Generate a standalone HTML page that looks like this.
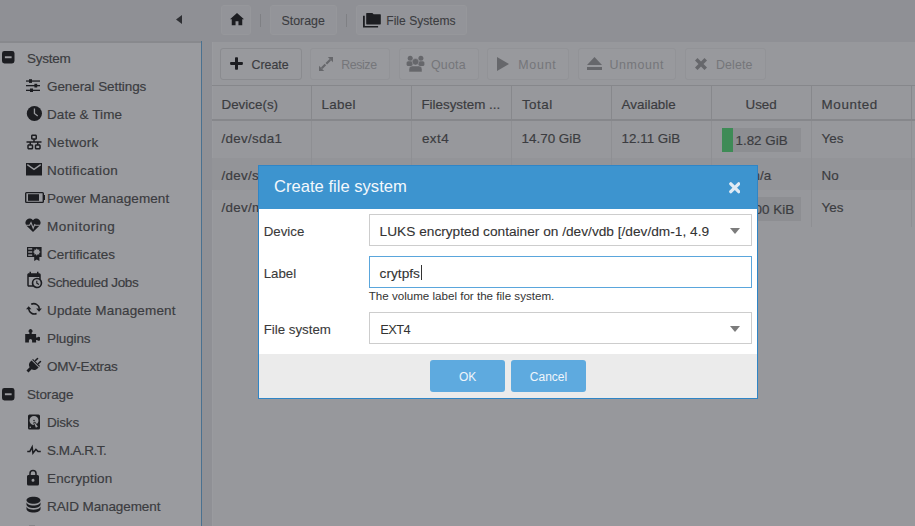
<!DOCTYPE html>
<html><head><meta charset="utf-8">
<style>
*{box-sizing:border-box;margin:0;padding:0}
html,body{width:915px;height:526px;overflow:hidden;background:#8f9095;font-family:"Liberation Sans",sans-serif;font-size:13px}
.a{position:absolute}
.t{position:absolute;white-space:nowrap;line-height:1;-webkit-text-stroke:0.18px currentColor}
svg{display:block}
</style></head><body>
<div class="a" style="left:0px;top:0px;width:915px;height:41px;background:#8f9095;"></div>
<svg class="a" style="left:176px;top:15px" width="6" height="9" viewBox="0 0 6 9" fill="#2e2f33"><path d="M6 0L0 4.5L6 9Z"/></svg>
<div class="a" style="left:221px;top:5px;width:30px;height:30px;background:#939499;border-radius:3px;border:1px solid #96979b"></div>
<svg class="a" style="left:230px;top:13px" width="14" height="13" viewBox="0 0 24 22" fill="#1c1d21"><path d="M12 0L0 10.5h3V21h6.5v-7h5v7H21V10.5h3Z"/></svg>
<div class="a" style="left:260px;top:14px;width:1px;height:13px;background:#7f8084;"></div>
<div class="a" style="left:270px;top:5px;width:67px;height:30px;background:#939499;border-radius:3px;border:1px solid #96979b"></div>
<div class="t" style="left:281.5px;top:14.70px;font-size:12.4px;color:#3b3c40;-webkit-text-stroke:0.1px currentColor">Storage</div>
<div class="a" style="left:346px;top:14px;width:1px;height:13px;background:#7f8084;"></div>
<div class="a" style="left:356px;top:5px;width:111px;height:30px;background:#939499;border-radius:3px;border:1px solid #96979b"></div>
<svg class="a" style="left:362px;top:12px" width="20" height="16" viewBox="0 0 20 16" fill="#1c1d21"><path d="M4.2 1.6a.6 .6 0 0 1 .6-.6H10.4L11.6 2.2H18.2a.6 .6 0 0 1 .6.6V11.8a.6 .6 0 0 1-.6.6H4.8a.6 .6 0 0 1-.6-.6Z"/><path d="M1 3.8H2.8V14H16.1V15.6H1Z"/></svg>
<div class="t" style="left:386.3px;top:14.96px;font-size:12.1px;color:#3b3c40;-webkit-text-stroke:0.1px currentColor">File Systems</div>
<div class="a" style="left:0px;top:41px;width:202px;height:485px;background:#9a9b9f;"></div>
<div class="a" style="left:0px;top:41px;width:201px;height:2px;background:#88898d;"></div>
<div class="a" style="left:201px;top:41px;width:1px;height:485px;background:#4a7190;"></div>
<div class="a" style="left:202px;top:41px;width:10px;height:485px;background:#8f9095;"></div>
<div class="a" style="left:212px;top:42px;width:703px;height:484px;background:#97989c;"></div>
<div class="a" style="left:212px;top:42px;width:1px;height:484px;background:#9a9b9f;"></div>
<div class="t" style="left:26.9px;top:51.87px;font-size:13.5px;color:#3b3c40;letter-spacing:-0.25px">System</div>
<div class="t" style="left:47px;top:79.87px;font-size:13.5px;color:#3b3c40;letter-spacing:-0.08px">General Settings</div>
<div class="t" style="left:47px;top:107.87px;font-size:13.5px;color:#3b3c40;letter-spacing:0.07px">Date &amp; Time</div>
<div class="t" style="left:47px;top:135.87px;font-size:13.5px;color:#3b3c40;letter-spacing:0.31px">Network</div>
<div class="t" style="left:47px;top:163.87px;font-size:13.5px;color:#3b3c40;letter-spacing:0.37px">Notification</div>
<div class="t" style="left:47px;top:191.87px;font-size:13.5px;color:#3b3c40;letter-spacing:0.09px">Power Management</div>
<div class="t" style="left:47px;top:219.87px;font-size:13.5px;color:#3b3c40;letter-spacing:0.53px">Monitoring</div>
<div class="t" style="left:47px;top:247.87px;font-size:13.5px;color:#3b3c40;letter-spacing:0.05px">Certificates</div>
<div class="t" style="left:47px;top:275.87px;font-size:13.5px;color:#3b3c40;letter-spacing:-0.33px">Scheduled Jobs</div>
<div class="t" style="left:47px;top:303.87px;font-size:13.5px;color:#3b3c40;letter-spacing:0.15px">Update Management</div>
<div class="t" style="left:47px;top:331.87px;font-size:13.5px;color:#3b3c40;letter-spacing:-0.11px">Plugins</div>
<div class="t" style="left:47px;top:359.87px;font-size:13.5px;color:#3b3c40;letter-spacing:-0.22px">OMV-Extras</div>
<div class="t" style="left:26.9px;top:387.87px;font-size:13.5px;color:#3b3c40;letter-spacing:-0.12px">Storage</div>
<div class="t" style="left:47px;top:415.87px;font-size:13.5px;color:#3b3c40;letter-spacing:-0.21px">Disks</div>
<div class="t" style="left:47px;top:443.87px;font-size:13.5px;color:#3b3c40;letter-spacing:-0.54px">S.M.A.R.T.</div>
<div class="t" style="left:47px;top:471.87px;font-size:13.5px;color:#3b3c40;letter-spacing:0.16px">Encryption</div>
<div class="t" style="left:47px;top:499.87px;font-size:13.5px;color:#3b3c40;letter-spacing:-0.1px">RAID Management</div>
<svg class="a" style="left:2px;top:51px" width="12.5" height="12.5" viewBox="0 0 13 13" fill="#1c1d21"><rect x="0" y="0" width="13" height="13" rx="2.5"/><rect x="3" y="5.5" width="7" height="2" fill="#9a9b9f"/></svg>
<svg class="a" style="left:2px;top:388px" width="12.5" height="12.5" viewBox="0 0 13 13" fill="#1c1d21"><rect x="0" y="0" width="13" height="13" rx="2.5"/><rect x="3" y="5.5" width="7" height="2" fill="#9a9b9f"/></svg>
<div class="a" style="left:220px;top:48px;width:82px;height:32px;background:#98999d;border:1px solid #8a8b8f;border-radius:3px"></div>
<div class="a" style="left:310px;top:48px;width:80px;height:32px;background:#98999d;border:1px solid #929397;border-radius:3px"></div>
<div class="a" style="left:399px;top:48px;width:80px;height:32px;background:#98999d;border:1px solid #929397;border-radius:3px"></div>
<div class="a" style="left:487px;top:48px;width:82px;height:32px;background:#98999d;border:1px solid #929397;border-radius:3px"></div>
<div class="a" style="left:578px;top:48px;width:98px;height:32px;background:#98999d;border:1px solid #929397;border-radius:3px"></div>
<div class="a" style="left:685px;top:48px;width:81px;height:32px;background:#98999d;border:1px solid #929397;border-radius:3px"></div>
<div class="t" style="left:251.5px;top:58.90px;font-size:12.4px;color:#3b3c40;">Create</div>
<div class="t" style="left:341.2px;top:58.90px;font-size:12.4px;color:#75767a;-webkit-text-stroke:0;letter-spacing:-0.4px">Resize</div>
<div class="t" style="left:431px;top:58.90px;font-size:12.4px;color:#75767a;-webkit-text-stroke:0;letter-spacing:0.2px">Quota</div>
<div class="t" style="left:518.3px;top:58.90px;font-size:12.4px;color:#75767a;-webkit-text-stroke:0;letter-spacing:0.75px">Mount</div>
<div class="t" style="left:609.5px;top:58.90px;font-size:12.4px;color:#75767a;-webkit-text-stroke:0;letter-spacing:0.6px">Unmount</div>
<div class="t" style="left:716px;top:58.90px;font-size:12.4px;color:#75767a;-webkit-text-stroke:0;letter-spacing:0.1px">Delete</div>
<div class="a" style="left:212px;top:85px;width:703px;height:1px;background:#86878b;"></div>
<div class="a" style="left:212px;top:119px;width:703px;height:2px;background:#86878b;"></div>
<div class="a" style="left:311px;top:86px;width:1px;height:33px;background:#87888c;"></div>
<div class="a" style="left:411px;top:86px;width:1px;height:33px;background:#87888c;"></div>
<div class="a" style="left:511px;top:86px;width:1px;height:33px;background:#87888c;"></div>
<div class="a" style="left:611px;top:86px;width:1px;height:33px;background:#87888c;"></div>
<div class="a" style="left:711px;top:86px;width:1px;height:33px;background:#87888c;"></div>
<div class="a" style="left:811px;top:86px;width:1px;height:33px;background:#87888c;"></div>
<div class="a" style="left:911px;top:86px;width:1px;height:33px;background:#87888c;"></div>
<div class="t" style="left:221.5px;top:97.86px;font-size:13.4px;color:#3b3c40;">Device(s)</div>
<div class="t" style="left:321.4px;top:97.86px;font-size:13.4px;color:#3b3c40;letter-spacing:0.35px">Label</div>
<div class="t" style="left:421.4px;top:97.86px;font-size:13.4px;color:#3b3c40;">Filesystem ...</div>
<div class="t" style="left:521.9px;top:97.86px;font-size:13.4px;color:#3b3c40;letter-spacing:0.5px">Total</div>
<div class="t" style="left:621.6px;top:97.86px;font-size:13.4px;color:#3b3c40;">Available</div>
<div class="t" style="left:745.5px;top:97.86px;font-size:13.4px;color:#3b3c40;">Used</div>
<div class="t" style="left:821.6px;top:97.86px;font-size:13.4px;color:#3b3c40;letter-spacing:0.6px">Mounted</div>
<div class="a" style="left:212px;top:158px;width:703px;height:32px;background:#939498;"></div>
<div class="a" style="left:311px;top:121px;width:1px;height:106px;background:#8e8f93;"></div>
<div class="a" style="left:411px;top:121px;width:1px;height:106px;background:#8e8f93;"></div>
<div class="a" style="left:511px;top:121px;width:1px;height:106px;background:#8e8f93;"></div>
<div class="a" style="left:611px;top:121px;width:1px;height:106px;background:#8e8f93;"></div>
<div class="a" style="left:711px;top:121px;width:1px;height:106px;background:#8e8f93;"></div>
<div class="a" style="left:811px;top:121px;width:1px;height:106px;background:#8e8f93;"></div>
<div class="a" style="left:911px;top:121px;width:1px;height:106px;background:#8e8f93;"></div>
<div class="t" style="left:221.5px;top:131.76px;font-size:13.4px;color:#3b3c40;letter-spacing:0.3px">/dev/sda1</div>
<div class="t" style="left:421.9px;top:131.76px;font-size:13.4px;color:#3b3c40;letter-spacing:0.5px">ext4</div>
<div class="t" style="left:521.6px;top:131.76px;font-size:13.4px;color:#3b3c40;">14.70 GiB</div>
<div class="t" style="left:621.6px;top:131.76px;font-size:13.4px;color:#3b3c40;">12.11 GiB</div>
<div class="a" style="left:722px;top:128px;width:79px;height:24px;background:#8d8e92;"></div>
<div class="a" style="left:722px;top:128px;width:11px;height:24px;background:#3e8b56;"></div>
<div class="t" style="left:735.5px;top:133.66px;font-size:13.4px;color:#3b3c40;">1.82 GiB</div>
<div class="t" style="left:821.6px;top:131.96px;font-size:13.4px;color:#3b3c40;">Yes</div>
<div class="t" style="left:221.5px;top:169.06px;font-size:13.4px;color:#3b3c40;letter-spacing:0.3px">/dev/sdb1</div>
<div class="t" style="left:621.6px;top:169.06px;font-size:13.4px;color:#3b3c40;">n/a</div>
<div class="t" style="left:752.5px;top:169.06px;font-size:13.4px;color:#3b3c40;">n/a</div>
<div class="t" style="left:821.6px;top:169.06px;font-size:13.4px;color:#3b3c40;">No</div>
<div class="t" style="left:221.5px;top:201.26px;font-size:13.4px;color:#3b3c40;letter-spacing:0.3px">/dev/md0</div>
<div class="a" style="left:722px;top:197px;width:79px;height:24px;background:#8d8e92;"></div>
<div class="t" style="left:736px;top:202.66px;font-size:13.4px;color:#3b3c40;">16.00 KiB</div>
<div class="t" style="left:821.6px;top:201.26px;font-size:13.4px;color:#3b3c40;">Yes</div>
<div class="a" style="left:258px;top:165px;width:500px;height:234px;background:#2f85c6;"></div>
<div class="a" style="left:259px;top:166px;width:498px;height:43px;background:#3d94cf;"></div>
<div class="a" style="left:259px;top:209px;width:498px;height:145px;background:#ffffff;"></div>
<div class="a" style="left:259px;top:354px;width:498px;height:44px;background:#ebebeb;"></div>
<div class="t" style="left:274px;top:178.55px;font-size:16.6px;color:#f3f8fc;-webkit-text-stroke:0">Create file system</div>
<div class="t" style="left:263.7px;top:224.54px;font-size:13.3px;color:#3a3a3a;-webkit-text-stroke:0.1px currentColor">Device</div>
<div class="t" style="left:263.7px;top:266.54px;font-size:13.3px;color:#3a3a3a;-webkit-text-stroke:0.1px currentColor">Label</div>
<div class="t" style="left:263.7px;top:322.94px;font-size:13.3px;color:#3a3a3a;-webkit-text-stroke:0.1px currentColor">File system</div>
<div class="a" style="left:369px;top:214px;width:383px;height:32px;background:#fff;border:1px solid #cdcdcd"></div>
<div class="a" style="left:369px;top:256px;width:383px;height:32px;background:#fff;border:1px solid #5aa6dc"></div>
<div class="a" style="left:369px;top:312px;width:383px;height:32px;background:#fff;border:1px solid #cdcdcd"></div>
<div class="t" style="left:379.6px;top:225.00px;font-size:13.7px;color:#333;-webkit-text-stroke:0.1px currentColor">LUKS encrypted container on /dev/vdb [/dev/dm-1, 4.9</div>
<div class="t" style="left:379.6px;top:267.00px;font-size:13.7px;color:#333;-webkit-text-stroke:0.1px currentColor">crytpfs</div>
<div class="a" style="left:421px;top:265px;width:1px;height:15px;background:#333;"></div>
<div class="t" style="left:380.2px;top:324.08px;font-size:12.9px;color:#333;-webkit-text-stroke:0;letter-spacing:-0.6px">EXT4</div>
<div class="t" style="left:368.7px;top:289.78px;font-size:11.6px;color:#333;-webkit-text-stroke:0">The volume label for the file system.</div>
<svg class="a" style="left:730px;top:228px" width="10" height="6" viewBox="0 0 10 6" fill="#7c7c7c"><path d="M0 0h10L5 6Z"/></svg>
<svg class="a" style="left:730px;top:326px" width="10" height="6" viewBox="0 0 10 6" fill="#7c7c7c"><path d="M0 0h10L5 6Z"/></svg>
<svg class="a" style="left:728.9px;top:182.2px" width="11.5" height="11.5" viewBox="0 0 11.5 11.5" fill="none"><path d="M1.8 1.8L9.7 9.7M9.7 1.8L1.8 9.7" stroke="#dfeaf4" stroke-width="3.3" stroke-linecap="round"/></svg>
<div class="a" style="left:430px;top:360px;width:75px;height:32px;background:#5eaadf;border-radius:3px"></div>
<div class="a" style="left:511px;top:360px;width:75px;height:32px;background:#5eaadf;border-radius:3px"></div>
<div class="t" style="left:459px;top:370.84px;font-size:12px;color:#eef5fb;-webkit-text-stroke:0">OK</div>
<div class="t" style="left:529.8px;top:370.84px;font-size:12px;color:#eef5fb;-webkit-text-stroke:0">Cancel</div>
<svg class="a" style="left:26px;top:78px" width="14" height="14" viewBox="0 0 14 14" fill="#1c1d21"><rect x="0" y="2.4" width="14" height="1.3"/><rect x="0" y="7" width="14" height="1.3"/><rect x="0" y="11.7" width="14" height="1.3"/><rect x="3" y="1.2" width="3" height="3.7"/><rect x="8.4" y="5.8" width="2.8" height="3.7"/><rect x="4" y="10.5" width="3" height="3.7"/></svg>
<svg class="a" style="left:25.5px;top:105px" width="17" height="17" viewBox="0 0 17 17" fill="#1c1d21"><circle cx="8.4" cy="8.5" r="7.6"/><path d="M7.8 3.6h1.3v4.6l3 2.2l-.8 1l-3.5-2.6Z" fill="#9a9b9f"/></svg>
<svg class="a" style="left:25px;top:133px" width="18" height="18" viewBox="0 0 24 24" fill="#1c1d21"><path d="M10,2C8.89,2 8,2.89 8,4V7C8,8.11 8.89,9 10,9H11V11H2V13H6V15H5C3.89,15 3,15.89 3,17V20C3,21.11 3.89,22 5,22H9C10.11,22 11,21.11 11,20V17C11,15.89 10.11,15 9,15H8V13H16V15H15C13.89,15 13,15.89 13,17V20C13,21.11 13.89,22 15,22H19C20.11,22 21,21.11 21,20V17C21,15.89 20.11,15 19,15H18V13H22V11H13V9H14C15.11,9 16,8.11 16,7V4C16,2.89 15.11,2 14,2H10M10,4H14V7H10V4M5,17H9V20H5V17M15,17H19V20H15V17Z"/></svg>
<svg class="a" style="left:26px;top:163px" width="16" height="12.5" viewBox="0 0 16 12.5" fill="#1c1d21"><path d="M0 0h16v12.5H0Z"/><path d="M1.3 1.6L8 6.4l6.7-4.8" fill="none" stroke="#9a9b9f" stroke-width="1.3"/></svg>
<svg class="a" style="left:24px;top:191px" width="22" height="13" viewBox="0 0 22 13" fill="#1c1d21"><path fill-rule="evenodd" d="M2.5 1h16a1.5 1.5 0 0 1 1.5 1.5v1.5h1v5h-1v1.5a1.5 1.5 0 0 1-1.5 1.5h-16a1.5 1.5 0 0 1-1.5-1.5v-8a1.5 1.5 0 0 1 1.5-1.5ZM2.4 2.3v8.4h16.2v-8.4Z"/><rect x="4" y="3.2" width="11" height="6.6"/></svg>
<svg class="a" style="left:25px;top:218px" width="16" height="14" viewBox="0 0 16 14" fill="#1c1d21"><path d="M8 14L1.3 7.4A4 4 0 0 1 8 2.2A4 4 0 0 1 14.7 7.4Z"/><path d="M0 7.2h4.6l1.4-2.6l2.2 5.6l1.5-3.6l.9.6H16" fill="none" stroke="#9a9b9f" stroke-width="1.1"/></svg>
<svg class="a" style="left:26.5px;top:246.5px" width="15" height="14" viewBox="0 0 15 14" fill="#1c1d21"><path d="M0 0h14.6v10H0Z"/><rect x="1.2" y="1.2" width="4" height="1.4" fill="#9a9b9f"/><rect x="1.2" y="4.3" width="4" height="1.4" fill="#9a9b9f"/><rect x="1.2" y="7.4" width="4" height="1.4" fill="#9a9b9f"/><path d="M9.8 1.2l.9 1.5l1.7-.3l-.3 1.7l1.5.9l-1.5.9l.3 1.7l-1.7-.3l-.9 1.5l-.9-1.5l-1.7.3l.3-1.7l-1.5-.9l1.5-.9l-.3-1.7l1.7.3Z" fill="#9a9b9f"/><path d="M7.2 9h5.2v5l-2.6-1.6l-2.6 1.6Z"/></svg>
<svg class="a" style="left:25px;top:271px" width="18" height="18" viewBox="0 0 24 24" fill="#1c1d21"><path d="M15,13H16.5V15.82L18.94,17.23L18.19,18.53L15,16.69V13M19,8H5V19H9.67C9.24,18.09 9,17.07 9,16A7,7 0 0,1 16,9C17.07,9 18.09,9.24 19,9.67V8M5,21C3.89,21 3,20.1 3,19V5C3,3.89 3.89,3 5,3H6V1H8V3H16V1H18V3H19A2,2 0 0,1 21,5V11.1C22.24,12.36 23,14.09 23,16A7,7 0 0,1 16,23C14.09,23 12.36,22.24 11.1,21H5M16,11.15A4.85,4.85 0 0,0 11.15,16C11.15,18.68 13.32,20.85 16,20.85A4.85,4.85 0 0,0 20.85,16C20.85,13.32 18.68,11.15 16,11.15Z"/></svg>
<svg class="a" style="left:24px;top:299px" width="20" height="20" viewBox="0 0 20 20" fill="#1c1d21"><path d="M7.2 5.3A5.6 5.6 0 0 1 15.4 9.8" fill="none" stroke="#1c1d21" stroke-width="1.6"/><path d="M12.2 9.6h5.7l-2.85 3.1Z"/><path d="M12.6 14.4A5.6 5.6 0 0 1 4.7 10" fill="none" stroke="#1c1d21" stroke-width="1.6"/><path d="M2 10.2h5.4l-2.7-3Z"/></svg>
<svg class="a" style="left:24px;top:328px" width="16" height="16" viewBox="0 0 16 16" fill="#1c1d21"><path d="M1.2 5.9h4.2v-1.3a1.9 1.9 0 1 1 2.3 0v1.3h4.4v3.7h1.1a1.9 1.9 0 1 1 0 2.3h-1.1v2.7H8.1v-2a1.6 1.6 0 0 0-3.2 0v2H1.2Z"/></svg>
<svg class="a" style="left:25px;top:357px" width="17" height="17" viewBox="0 0 24 24" fill="#1c1d21"><g transform="rotate(45 12 12)"><rect x="8" y="0" width="2.2" height="6" rx="1"/><rect x="13.8" y="0" width="2.2" height="6" rx="1"/><path d="M5 6h14v1.6H5Z"/><path d="M5 8.8h14v2.2a7 7 0 0 1-5 6.7V24h-4v-6.3A7 7 0 0 1 5 11Z"/></g></svg>
<svg class="a" style="left:25px;top:413px" width="18" height="18" viewBox="0 0 24 24" fill="#1c1d21"><path d="M6,2H18A2,2 0 0,1 20,4V20A2,2 0 0,1 18,22H6A2,2 0 0,1 4,20V4A2,2 0 0,1 6,2M12,4A6,6 0 0,0 6,10C6,13.31 8.69,16 12.1,16L11.22,13.77C10.95,13.29 11.11,12.68 11.59,12.4L12.45,11.9C12.93,11.63 13.54,11.79 13.82,12.27L15.74,14.69C17.12,13.59 18,11.9 18,10A6,6 0 0,0 12,4M12,9A1,1 0 0,1 13,10A1,1 0 0,1 12,11A1,1 0 0,1 11,10A1,1 0 0,1 12,9M7,18A1,1 0 0,0 6,19A1,1 0 0,0 7,20A1,1 0 0,0 8,19A1,1 0 0,0 7,18M12.09,13.27L14.58,19.58L17.17,18.08L12.95,12.77L12.09,13.27Z"/></svg>
<svg class="a" style="left:25px;top:441px" width="18" height="18" viewBox="0 0 24 24" fill="#1c1d21"><path d="M3,13H5.79L10.1,4.79L11.28,13.75L14.5,9.66L17.83,13H21V15H17L14.67,12.67L9.92,18.73L8.94,11.31L7,15H3V13Z"/></svg>
<svg class="a" style="left:24px;top:469px" width="18" height="18" viewBox="0 0 24 24" fill="#1c1d21"><path d="M12,17A2,2 0 0,0 14,15C14,13.89 13.1,13 12,13A2,2 0 0,0 10,15A2,2 0 0,0 12,17M18,8A2,2 0 0,1 20,10V20A2,2 0 0,1 18,22H6A2,2 0 0,1 4,20V10C4,8.89 4.9,8 6,8H7V6A5,5 0 0,1 12,1A5,5 0 0,1 17,6V8H18M12,3A3,3 0 0,0 9,6V8H15V6A3,3 0 0,0 12,3Z"/></svg>
<svg class="a" style="left:22.5px;top:493.5px" width="21" height="21" viewBox="0 0 24 24" fill="#1c1d21"><path d="M12,3C7.58,3 4,4.79 4,7C4,9.21 7.58,11 12,11C16.42,11 20,9.21 20,7C20,4.79 16.42,3 12,3M4,9V12C4,14.21 7.58,16 12,16C16.42,16 20,14.21 20,12V9C20,11.21 16.42,13 12,13C7.58,13 4,11.21 4,9M4,14V17C4,19.21 7.58,21 12,21C16.42,21 20,19.21 20,17V14C20,16.21 16.42,18 12,18C7.58,18 4,16.21 4,14Z"/></svg>
<div class="a" style="left:29px;top:525px;width:6px;height:1px;background:#85868a;"></div>
<svg class="a" style="left:229.5px;top:57px" width="13" height="13" viewBox="0 0 13 13" fill="#1c1d21"><rect x="5" y="0.2" width="3" height="12.6" rx="0.8"/><rect x="0.1" y="4.9" width="12.8" height="3" rx="0.8"/></svg>
<svg class="a" style="left:318px;top:56px" width="16" height="16" viewBox="0 0 16 16" fill="#66676b"><path d="M9.8 1H15V6.2Z"/><path d="M1 9.8V15H6.2Z"/><path d="M12.3 3.7L8.3 7.7M3.7 12.3L7.4 8.6" stroke="#66676b" stroke-width="2.1"/></svg>
<svg class="a" style="left:406px;top:55px" width="19" height="17" viewBox="0 0 19 17" fill="#66676b"><circle cx="4.2" cy="3.3" r="2.5"/><circle cx="14.9" cy="3.3" r="2.5"/><rect x="0.6" y="6.2" width="6" height="4.8" rx="1.6"/><rect x="12.4" y="6.2" width="6" height="4.8" rx="1.6"/><circle cx="9.5" cy="6.8" r="3.3" stroke="#98999d" stroke-width="0.5"/><path d="M3 16.9V14.2a3.2 3.2 0 0 1 3.2-3.2H12.8a3.2 3.2 0 0 1 3.2 3.2V16.9Z" stroke="#98999d" stroke-width="0.5"/></svg>
<svg class="a" style="left:497px;top:57px" width="12" height="14" viewBox="0 0 12 14" fill="#66676b"><path d="M0 0L12 7L0 14Z"/></svg>
<svg class="a" style="left:587px;top:57px" width="15" height="13" viewBox="0 0 15 13" fill="#66676b"><path d="M7.5 0L15 8H0Z"/><rect x="0" y="10" width="15" height="3"/></svg>
<svg class="a" style="left:695px;top:58px" width="12" height="12" viewBox="0 0 12 12" fill="#66676b"><path d="M0 2.5L2.5 0L6 3.5L9.5 0L12 2.5L8.5 6L12 9.5L9.5 12L6 8.5L2.5 12L0 9.5L3.5 6Z"/></svg>
</body></html>
